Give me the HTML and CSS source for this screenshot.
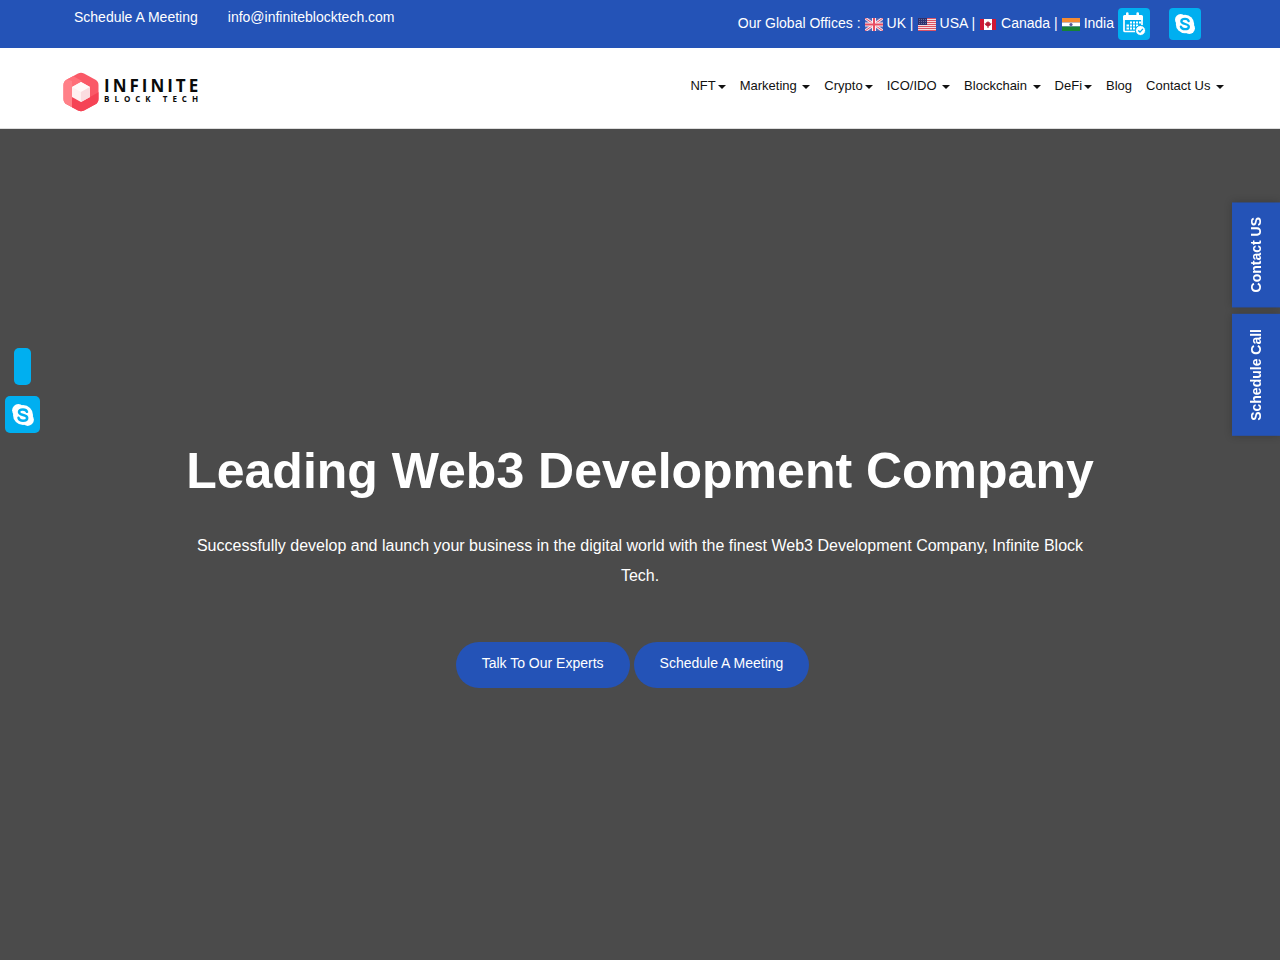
FILE: index.html
```
<!DOCTYPE html>
<html lang="en">
<head>
<meta charset="utf-8">
<meta name="viewport" content="width=device-width, initial-scale=1">
<title>Infinite Block Tech</title>
<link rel="stylesheet" href="styles.css">
</head>
<body>
<svg width="0" height="0" class="sprite" aria-hidden="true">
  <symbol id="skype" viewBox="0 0 24 24">
    <g fill="#fff"><circle cx="12" cy="12" r="10"/><circle cx="7.3" cy="7.3" r="6.200"/><circle cx="16.7" cy="16.7" r="6.200"/></g>
    <path d="M16 8.8C15.4 6.9 13.8 6.4 12 6.4c-2.200 0-4 .9-4 2.700 0 3.900 8.200 1.900 8.200 5.800 0 1.900-2 2.800-4.200 2.800-2.300 0-3.900-.8-4.500-2.900" fill="none" stroke="#00aff0" stroke-width="2.500" stroke-linecap="round"/>
  </symbol>
</svg>
<div class="topbar">
  <div class="contacts">
    <a href="#meeting">Schedule A Meeting</a>
    <a href="mailto:info@infiniteblocktech.com">info@infiniteblocktech.com</a>
  </div>
  <div class="offices">
    <span>Our Global Offices :</span>
    <svg class="flag" viewBox="0 0 18 13"><path fill="#5267b4" d="M0 0h18v13H0z"/><path d="M0 0l18 13M18 0L0 13" stroke="#f3dfea" stroke-width="3"/><path d="M0 0l18 13M18 0L0 13" stroke="#e5526b" stroke-width="1"/><path d="M9 0v13M0 6.500h18" stroke="#fbeef2" stroke-width="4"/><path d="M9 0v13M0 6.500h18" stroke="#e74d63" stroke-width="2"/></svg>
    <span>UK |</span>
    <svg class="flag" viewBox="0 0 18 13"><path fill="#f6dce0" d="M0 0h18v13H0z"/><path d="M0 .5h18M0 2.500h18M0 4.500h18M0 6.500h18M0 8.500h18M0 10.500h18M0 12.500h18" stroke="#dc5264"/><path fill="#2d316e" d="M0 0h9v7H0z"/><path d="M1 1.500h7M1 3.500h7M1 5.500h7" stroke="#6a6a9c" stroke-dasharray="1 1"/></svg>
    <span>USA |</span>
    <svg class="flag" viewBox="0 0 18 13"><path fill="#cf1734" d="M1 1h16v11H1z"/><path fill="#fff" d="M5 1h8v11H5z"/><path fill="#b71d35" d="M9 3l1 1.500 1-.5-.2 1.500 1.700-.2-.8 1.700L9.500 8.500V10h-1V8.500L6.300 7l-.8-1.700 1.700.2L7 4l1 .5z"/></svg>
    <span>Canada |</span>
    <svg class="flag" viewBox="0 0 18 13"><path fill="#f48b32" d="M0 0h18v4.500H0z"/><path fill="#fff" d="M0 4.500h18v4H0z"/><path fill="#168236" d="M0 8.500h18V13H0z"/><circle cx="9" cy="6.500" r="1.600" fill="#55589c"/></svg>
    <span>India</span>
    <a class="tile" href="#calendar" aria-label="Calendar"><svg width="24" height="24" viewBox="0 0 24 24"><path fill="#fff" d="M1 4.500Q1 3 2.500 3H4V1.500a1.300 1.300 0 0 1 2.600 0V3h7.800V1.500a1.300 1.300 0 0 1 2.600 0V3h2.500Q21 3 21 4.500V8H1z"/><path d="M2 8v10.500q0 1 1 1h10M20 8v5" fill="none" stroke="#fff" stroke-width="1.700"/><path fill="#fff" d="M8 9.500h2v2H8zM11 9.500h2v2h-2zM14 9.500h2v2h-2zM17 9.500h2v2h-2zM4.500 12.500h2.500v2H4.500zM8 12.500h2v2H8zM11 12.500h2v2h-2zM14 12.500h2v2h-2zM4.500 15.500h2.500v2H4.500zM8 15.500h2v2H8zM11 15.500h2v2h-2z"/><circle cx="18.500" cy="18.500" r="5" fill="#fff" stroke="#00aff0"/><path d="M16.300 18.500l1.700 1.600 2.900-3.200" fill="none" stroke="#00aff0" stroke-width="1.400"/></svg></a>
    <a class="tile tile-last" href="#skype-chat" aria-label="Skype"><svg width="22" height="22"><use href="#skype"/></svg></a>
  </div>
</div>
<header class="header">
  <a class="logo" href="#home" aria-label="Infinite Block Tech">
    <svg width="36" height="40" viewBox="0 0 36 40"><defs><clipPath id="hex"><path d="M15 1.600q3-1.600 6 0l11.500 6.200Q35.500 9.500 35.500 13v14q0 3.500-3 5.200L21 38.400q-3 1.600-6 0L3.500 32.200Q.5 30.500.5 27V13q0-3.500 3-5.200z"/></clipPath></defs><g clip-path="url(#hex)"><path fill="#fa5967" d="M0 0h36v40H0z"/><path fill="#ff8088" d="M0 6l9 1v23.500L10 36 0 31z"/><path fill="#ff6f79" d="M3 7l7-3 9 5-10 6V9z"/><path fill="#f54355" d="M9 25l9 5 18-10v20H9z"/></g><path fill="#fff0f0" d="M18 10l9 5v10l-9 5-9-5V15z"/><path fill="#fffafa" d="M18 10l9 5-9 5-9-5z"/><path fill="#fbdce0" d="M18 20l9-5v10l-9 5z"/></svg>
    <span class="wordmark"><span class="brand">INFINITE</span><span class="subbrand">BLOCK TECH</span></span>
  </a>
  <nav class="nav">
    <a href="#nft">NFT<i class="caret"></i></a>
    <a href="#marketing">Marketing <i class="caret"></i></a>
    <a href="#crypto">Crypto<i class="caret"></i></a>
    <a href="#ico">ICO/IDO <i class="caret"></i></a>
    <a href="#blockchain">Blockchain <i class="caret"></i></a>
    <a href="#defi">DeFi<i class="caret"></i></a>
    <a href="#blog">Blog</a>
    <a href="#contact">Contact Us <i class="caret"></i></a>
  </nav>
</header>
<main class="hero">
  <h1>Leading Web3 Development Company</h1>
  <p>Successfully develop and launch your business in the digital world with the finest Web3 Development Company, Infinite Block Tech.</p>
  <div class="actions">
    <a class="pill" href="#experts">Talk To Our Experts</a>
    <a class="pill" href="#meeting">Schedule A Meeting</a>
  </div>
</main>
<div class="chat">
  <a class="chat-blank" href="#chat" aria-label="Chat"></a>
  <a class="chat-skype" href="#skype-chat" aria-label="Skype"><svg width="24" height="24"><use href="#skype"/></svg></a>
</div>
<div class="side">
  <button type="button">Contact US</button>
  <button type="button">Schedule Call</button>
</div>
</body>
</html>
```
FILE: styles.css
```
* { box-sizing: border-box; }
body {
  margin: 0;
  min-height: 100vh;
  display: flex;
  flex-direction: column;
  background: #4b4b4b;
  color: #fff;
  font: 14px/20px "Liberation Sans", Arial, sans-serif;
}
a { color: inherit; text-decoration: none; }
svg { display: block; flex: none; }
.sprite { position: absolute; }
.topbar {
  display: flex;
  justify-content: space-between;
  padding: 8px 79px 8px 74px;
  background: #2453b7;
}
.contacts { display: flex; gap: 30px; line-height: 18px; }
.offices { display: flex; align-items: center; gap: 4px; }
.offices > span { padding-bottom: 2px; }
.flag { width: 18px; height: 13px; }
.tile {
  display: flex;
  align-items: center;
  justify-content: center;
  width: 32px;
  height: 32px;
  border-radius: 4px;
  background: #00aff0;
}
.tile-last { margin-left: 15px; }
.header {
  display: flex;
  justify-content: space-between;
  align-items: flex-start;
  padding: 24px 56px 16px 63px;
  background: #fff;
  color: #111;
  border-bottom: 1px solid #ddd;
}
.logo { display: flex; gap: 5px; color: #0a0a0a; }
.wordmark {
  display: flex;
  flex-direction: column;
  padding-top: 5px;
  font-family: "Open Sans", sans-serif;
  font-weight: 700;
  white-space: nowrap;
}
.brand { font-size: 17px; line-height: 18px; letter-spacing: 3px; }
.subbrand { font-size: 8px; line-height: 8px; letter-spacing: 5px; }
.nav { display: flex; gap: 14px; padding-top: 4px; font-size: 13px; white-space: nowrap; }
.caret {
  display: inline-block;
  margin-left: 2px;
  vertical-align: middle;
  border: 4px solid transparent;
  border-top-color: #111;
  border-bottom: 0;
}
.hero {
  flex: 1;
  display: flex;
  flex-direction: column;
  align-items: center;
  padding: 312px 24px 48px;
  text-align: center;
}
h1 { margin: 0; font-size: 50px; line-height: 60px; }
.hero p { margin: 30px 0 51px; max-width: 910px; font-size: 16px; line-height: 30px; }
.actions { display: flex; gap: 4px; margin-right: 15px; }
.pill {
  padding: 11px 26px 15px;
  border-radius: 23px;
  background: #2453b7;
}
.chat {
  position: fixed;
  left: 5px;
  top: 348px;
  display: flex;
  flex-direction: column;
  align-items: center;
  gap: 11px;
}
.chat a { height: 37px; border-radius: 5px; background: #00aff0; }
.chat-blank { width: 17px; }
.chat-skype { display: flex; align-items: center; justify-content: center; width: 35px; }
.side {
  position: fixed;
  right: 0;
  top: 202px;
  display: flex;
  flex-direction: column;
  gap: 7px;
}
.side button {
  width: 48px;
  padding: 15px 0;
  border: 0;
  background: #2453b7;
  color: #fff;
  font: bold 14px/20px "Liberation Sans", Arial, sans-serif;
  writing-mode: vertical-rl;
  transform: rotate(180deg);
  box-shadow: 0 0 8px rgba(0, 0, 0, 0.2);
}
```
